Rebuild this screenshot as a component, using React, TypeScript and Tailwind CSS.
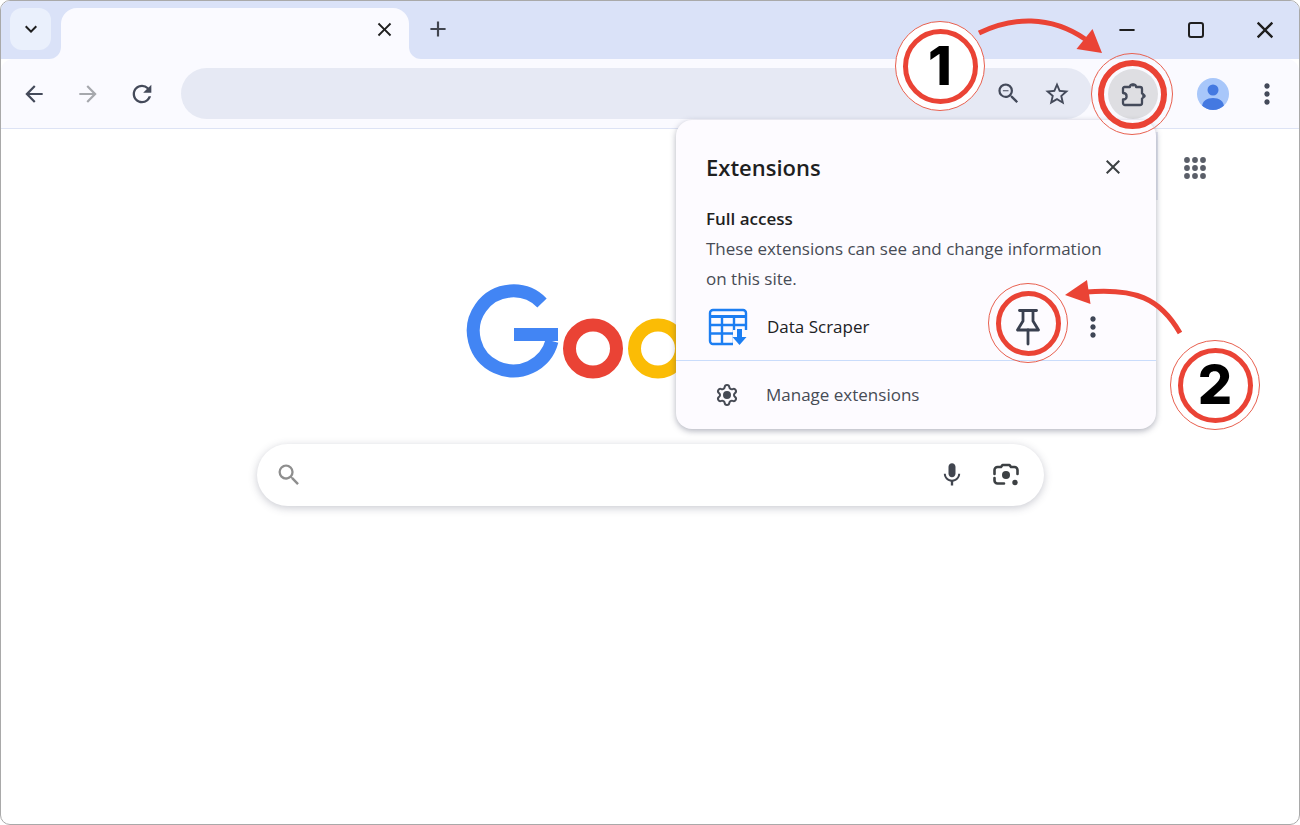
import { Settings } from "lucide-react";
import {
  MdAdd,
  MdArrowBack,
  MdArrowForward,
  MdClose,
  MdKeyboardArrowDown,
  MdMic,
  MdMoreVert,
  MdRefresh,
  MdRemove,
  MdSearch,
  MdStarBorder,
  MdZoomOut,
} from "react-icons/md";

const uiFont = "font-['Open_Sans','Noto_Sans',sans-serif]";

function ExtensionIcon() {
  return (
    <svg width="26" height="26" viewBox="0 0 26 26" fill="none" stroke="#444a5a" strokeWidth="2.3" strokeLinejoin="round">
      <path d="M4.5 6H10a3 2.6 0 0 1 6 0h4a2 2 0 0 1 2 2v4.5a2.6 2.6 0 0 1 0 5V22a2 2 0 0 1-2 2H5a2 2 0 0 1-2-2v-3.5c2.6 0 3.6-1.2 3.6-3S5.6 12 3 12V7.5A1.5 1.5 0 0 1 4.5 6Z" />
      <circle cx="13" cy="4" r="1.6" fill="#444a5a" stroke="none" />
      <circle cx="24" cy="15" r="1.8" fill="#444a5a" stroke="none" />
    </svg>
  );
}

function AppsIcon() {
  const spots = [4, 12, 20];
  return (
    <svg width="24" height="24" viewBox="0 0 24 24" fill="#5a5e68">
      {spots.map((y) => spots.map((x) => <circle key={`${x}-${y}`} cx={x} cy={y} r="2.900" />))}
    </svg>
  );
}

function LensIcon() {
  return (
    <svg width="28" height="26" viewBox="0 0 28 26" fill="none" stroke="#3c4043" strokeWidth="2.6" strokeLinecap="round" strokeLinejoin="round">
      <path d="M2.5 12V8a3 3 0 0 1 3-3H9l1.5-2h7L19 5h3.5a3 3 0 0 1 3 3v4" />
      <path d="M2.5 16v2.500a3 3 0 0 0 3 3H12" />
      <circle cx="14" cy="13" r="4" fill="#3c4043" stroke="none" />
      <circle cx="23" cy="20.500" r="2.700" fill="#3c4043" stroke="none" />
    </svg>
  );
}

function PinIcon() {
  return (
    <svg width="26" height="38" viewBox="0 0 26 38" fill="none" stroke="#3a4050" strokeWidth="2.800" strokeLinejoin="round">
      <path d="M4.500 2.500H21.500" strokeLinecap="round" />
      <path d="M8 2.500V13L2.500 22H23.500L18 13V2.500" />
      <path d="M13 22V36" strokeLinecap="round" />
    </svg>
  );
}

function SheetIcon() {
  return (
    <svg width="40" height="38" viewBox="0 0 40 38" fill="none" stroke="#1c7ef2" strokeWidth="2.400">
      <rect x="2" y="2" width="36" height="34" rx="3" />
      <path d="M2 8.500H38" strokeWidth="3" />
      <path d="M2 17H38M2 25.500H38M14 8.500V35M26 8.500V35" />
      <rect x="25" y="22" width="15" height="16" fill="#fdfbff" stroke="none" />
      <path d="M29 21h5v8h4.500l-7 8-7-8H29Z" fill="#1c7ef2" stroke="none" />
    </svg>
  );
}

function GoogleLogo() {
  return (
    <svg className="overflow-visible" width="366" height="93" viewBox="0 0 366 93" fill="none">
      <path d="M75 17A40 40 0 1 0 85 55" stroke="#4285f4" strokeWidth="13" />
      <rect x="47" y="42" width="44" height="13" fill="#4285f4" />
      <circle cx="126" cy="62.500" r="23.500" stroke="#ea4335" strokeWidth="13" />
      <circle cx="191" cy="62.500" r="23.500" stroke="#fbbc05" strokeWidth="13" />
    </svg>
  );
}

function Arrows() {
  return (
    <svg className="absolute -left-px -top-px pointer-events-none" width="1300" height="825" viewBox="0 0 1300 825" fill="none">
      <path d="M979 33C1012 17 1050 15 1085 39" stroke="#ea4335" strokeWidth="5" />
      <path d="M1102 53L1092.500 29L1076.500 49Z" fill="#ea4335" />
      <path d="M1180 333C1160 298 1135 288 1086 292" stroke="#ea4335" strokeWidth="5" />
      <path d="M1065 295L1087 280L1090.500 304Z" fill="#ea4335" />
    </svg>
  );
}

export default function App() {
  return (
    <div className={`relative w-[1300px] h-[825px] box-border overflow-hidden rounded-[10px] border border-[#a9a9a9] bg-white ${uiFont}`}>
      {/* tab strip */}
      <div className="flex h-[58px] bg-[#dae2f8]">
        <div className="ml-[9px] mt-[7px] flex h-[42px] w-[41px] items-center justify-center rounded-xl bg-[#eaf0fc] text-[#1f1f1f]">
          <MdKeyboardArrowDown size={24} />
        </div>
        <div className="relative ml-[10px] mt-[7px] flex h-[51px] w-[348px] items-center justify-end rounded-t-2xl bg-[#fafaff] pr-[13px] pb-[9px]">
          <MdClose size={23} className="text-[#1f1f1f]" />
          <span className="absolute -left-3 bottom-0 h-3 w-3 bg-[#fafaff]">
            <span className="block h-3 w-3 rounded-br-xl bg-[#dae2f8]" />
          </span>
          <span className="absolute -right-3 bottom-0 h-3 w-3 bg-[#fafaff]">
            <span className="block h-3 w-3 rounded-bl-xl bg-[#dae2f8]" />
          </span>
        </div>
        <div className="ml-[16px] mt-[7px] flex h-[42px] items-center text-[#41454f]">
          <MdAdd size={26} />
        </div>
        <div className="ml-auto flex h-[58px] text-[#1f1f1f]">
          <div className="flex w-[69px] items-center justify-center">
            <MdRemove size={26} />
          </div>
          <div className="flex w-[69px] items-center justify-center">
            <div className="h-[16px] w-[16px] rounded-[3px] border-[2.5px] border-[#1f1f1f]" />
          </div>
          <div className="flex w-[69px] items-center justify-center">
            <MdClose size={28} />
          </div>
        </div>
      </div>

      {/* toolbar */}
      <div className="flex h-[70px] items-center rounded-t-[12px] border-b border-[#dde3f5] bg-[#fafaff] pl-[6px]">
        <div className="flex w-[54px] justify-center text-[#444a5a]">
          <MdArrowBack size={26} />
        </div>
        <div className="flex w-[54px] justify-center text-[#a6a8ad]">
          <MdArrowForward size={26} />
        </div>
        <div className="flex w-[54px] justify-center text-[#444a5a]">
          <MdRefresh size={28} />
        </div>
        <div className="ml-[12px] flex h-[51px] w-[911px] items-center justify-end rounded-full bg-[#e6e9f4] pr-[21px] text-[#444a5a]">
          <MdZoomOut size={27} />
          <MdStarBorder size={28} className="ml-[21px]" />
        </div>
        <div className="ml-4 flex h-[50px] w-[50px] items-center justify-center rounded-full bg-[#dedee2]">
          <ExtensionIcon />
        </div>
        <div className="ml-[39px] flex h-8 w-8 items-center justify-center overflow-hidden rounded-full bg-[#a8c7fa]">
          <svg width="32" height="32" viewBox="0 0 32 32" fill="#4479e1">
            <circle cx="16" cy="12" r="5.500" />
            <path d="M5 29c0-6 5-9 11-9s11 3 11 9v3H5Z" />
          </svg>
        </div>
        <div className="ml-[22px] text-[#444a5a]">
          <MdMoreVert size={32} />
        </div>
      </div>

      {/* page */}
      <main className="flex flex-col items-center pt-[157px]">
        <GoogleLogo />
        <div className="mt-[65px] flex h-[62px] w-[787px] items-center justify-between rounded-full bg-white pl-[18px] pr-[24px] shadow-[0_2px_8px_rgba(60,64,90,0.28)]">
          <MdSearch size={28} className="text-[#8e8e8e]" />
          <div className="flex items-center gap-[26px]">
            <MdMic size={28} className="text-[#41454f]" />
            <LensIcon />
          </div>
        </div>
      </main>

      {/* apps launcher */}
      <div className="absolute left-[1182px] top-[155px]">
        <AppsIcon />
      </div>

      {/* extensions popup */}
      <div className="absolute left-[1154px] top-[131px] h-[68px] w-[3px] bg-[#e6e8f2]" />
      <div className="absolute left-[675px] top-[119px] w-[480px] h-[309px] rounded-2xl bg-[#fdfbff] text-[#1f1f1f] shadow-[0_2px_6px_rgba(60,64,90,0.4)]">
        <div className="flex h-[66px] items-end justify-between pl-[30px] pr-[30px] pb-0">
          <div className="h-[36px] text-[22px] font-semibold leading-[35px]">Extensions</div>
          <MdClose size={24} className="mb-[7px] mr-[1px] text-[#3c4043]" />
        </div>
        <div className="mt-[18px] px-[30px] text-[17px] leading-[30px] text-[#474b55]">
          <div className="font-semibold text-[#1f1f1f]">Full access</div>
          <div>These extensions can see and change information on this site.</div>
        </div>
        <div className="flex h-[67px] items-center border-b border-[#c9dcfb] pl-[32px]">
          <SheetIcon />
          <span className="ml-[19px] text-[17px] text-[#202124]">Data Scraper</span>
          <span className="ml-auto mr-[36px] flex items-center">
            <PinIcon />
          </span>
          <span className="mr-[47px] text-[#3f4656]">
            <MdMoreVert size={32} />
          </span>
        </div>
        <div className="flex h-[67px] items-center pl-[39px] text-[#474b55]">
          <Settings size={24} strokeWidth={2} className="[&>circle]:fill-current" />
          <span className="ml-[27px] text-[17px]">Manage extensions</span>
        </div>
      </div>

      <Arrows />

      {/* ring round the extensions button */}
      <div className="absolute left-[1090px] top-[52px] flex h-[82px] w-[82px] items-center justify-center rounded-full border-[1.5px] border-[#e8604f]">
        <div className="h-[69px] w-[69px] rounded-full border-[6px] border-[#ea4335]" />
      </div>
      {/* ring round the pin */}
      <div className="absolute left-[987px] top-[282px] flex h-[80px] w-[80px] items-center justify-center rounded-full border-[1.5px] border-[#e8604f]">
        <div className="h-[65px] w-[65px] rounded-full border-[5px] border-[#ea4335]" />
      </div>

      {/* numbered badges */}
      <div className="absolute left-[894px] top-[20px] flex h-[90px] w-[90px] items-center justify-center rounded-full border-[1.5px] border-[#e8604f] bg-white">
        <div className="flex h-[75px] w-[75px] items-center justify-center rounded-full border-[5px] border-[#ea4335] font-['Inter',sans-serif] text-[54px] font-extrabold leading-none text-black">
          1
        </div>
      </div>
      <div className="absolute left-[1169px] top-[339px] flex h-[90px] w-[90px] items-center justify-center rounded-full border-[1.5px] border-[#e8604f] bg-white">
        <div className="flex h-[75px] w-[75px] items-center justify-center rounded-full border-[5px] border-[#ea4335] font-['Inter',sans-serif] text-[54px] font-extrabold leading-none text-black">
          2
        </div>
      </div>
    </div>
  );
}
